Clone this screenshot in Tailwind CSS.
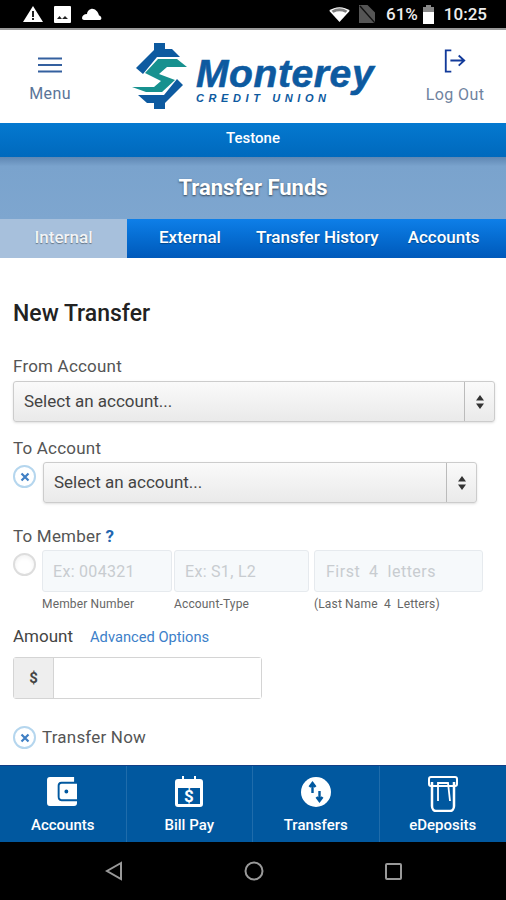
<!DOCTYPE html>
<html lang="en">
<head>
  <meta charset="UTF-8">
  <meta name="viewport" content="width=device-width, initial-scale=1.0">
  <title>Transfer Funds</title>
  <script src="https://cdn.jsdelivr.net/npm/@tailwindcss/browser@4"></script>
</head>
<body class="bg-white font-['Roboto',sans-serif] text-[#333]">
  <div class="w-[506px] h-[900px] flex flex-col overflow-hidden">

    <!-- Status bar -->
    <div class="h-[30px] shrink-0 bg-black border-b-2 border-[#999] flex items-center pl-[23px] pr-[19px] text-white">
      <svg class="w-[20px] h-[18px]" viewBox="0 0 20 18"><path d="M10 1 L20 17 H0 Z" fill="#fff"/><rect x="9" y="6" width="2" height="6" fill="#222"/><rect x="9" y="13" width="2" height="2" fill="#222"/></svg>
      <svg class="w-[17px] h-[17px] ml-[11px]" viewBox="0 0 17 17"><rect width="17" height="17" rx="1" fill="#fff"/><path d="M3 13 L5.500 10 L8 13 Z M8 13 L11 10 L14 13 Z" fill="#222"/></svg>
      <svg class="w-[20px] h-[12px] ml-[11px]" viewBox="0 0 20 12"><path d="M2 12 H18 C20 12 20 8 17 7.500 C16 3 12 0 9 1 C6.500 1.500 5 4 5 6 C2 6 0 8 0 10 C0 11 1 12 2 12 Z" fill="#fff"/></svg>
      <svg class="w-[21px] h-[15px] ml-auto" viewBox="0 0 22 16"><path d="M0 4 C6 -1 16 -1 22 4 L11 16 Z" fill="#fff"/><path d="M2.500 4 C8 0.500 14 0.500 19.500 4 L17.500 6 C13 4 9 4 4.500 6 Z" fill="#000" opacity=".5"/></svg>
      <svg class="w-[16px] h-[18px] ml-[9px]" viewBox="0 0 17 19"><path d="M0 19 V0 H9 L17 8 V19 Z" fill="#555"/><path d="M1 1 L17 19" stroke="#111" stroke-width="1.500"/></svg>
      <span class="ml-[11px] text-[17px] font-medium leading-none text-[#eee]">61%</span>
      <svg class="w-[11px] h-[19px] ml-[5px]" viewBox="0 0 11 19"><rect x="3" width="5" height="3" fill="#888"/><rect y="2" width="11" height="6" fill="#888"/><rect y="7" width="11" height="12" fill="#fff"/></svg>
      <span class="ml-[10px] text-[17px] font-medium leading-none text-[#eee]">10:25</span>
    </div>

    <!-- Header -->
    <header class="h-[93px] shrink-0 flex items-start relative">
      <div class="w-[100px] flex flex-col items-center pt-[27px]">
        <svg class="w-[24px] h-[16px]" viewBox="0 0 24 16" fill="none" stroke="#34609f" stroke-width="2"><path d="M0 1.500 H24 M0 8 H24 M0 14.500 H24"/></svg>
        <span class="mt-[11px] text-[16px] leading-[20px] tracking-[0.4px] text-[#5a7498]">Menu</span>
      </div>
      <div class="w-[304px] pl-[31px] pt-[12px] flex items-start">
        <svg class="w-[58px] h-[68px] shrink-0" viewBox="132 42 58 68">
          <path d="M155 43 H166 V49 H173 L181 57 H158 L144 74 L137 68 L155 50 Z" fill="#0d5aa0"/>
          <path d="M159 59 H178 L188 67 H168 L160 74 L176 80 L163 92 H147 L133 87 H155 L162 81 L146 73 Z" fill="#17918f"/>
          <path d="M178 79 L184 85 L166 103 V109 H155 V103 H148 L139 95 H165 Z" fill="#0d5aa0"/>
        </svg>
        <div class="ml-[7px] mt-[14px] flex flex-col">
          <span class="text-[#0d5aa0] text-[39px] leading-[36px] font-bold italic font-['Liberation_Sans',sans-serif] tracking-[0.6px] [-webkit-text-stroke:0.6px_#0d5aa0]">Monterey</span>
          <span class="text-[#0d5aa0] text-[11px] leading-[12px] font-bold italic tracking-[4.6px] font-['Liberation_Sans',sans-serif]">CREDIT UNION</span>
        </div>
      </div>
      <div class="w-[102px] flex flex-col items-center pt-[19px]">
        <svg class="w-[24px] h-[24px]" viewBox="0 0 24 26" fill="none" stroke="#123a9a" stroke-width="2"><path d="M8 1.500 H2 V24.500 H8 M7 12.500 H22 M16 7 L22 12.500 L16 18"/></svg>
        <span class="mt-[12px] text-[16px] leading-[20px] tracking-[0.4px] text-[#6f83a0]">Log Out</span>
      </div>
    </header>

    <!-- Member bar -->
    <div class="h-[34px] shrink-0 bg-gradient-to-b from-[#0579d0] to-[#0069bd] flex items-center justify-center pb-[3px] text-white text-[15px] font-medium">Testone</div>

    <!-- Title band -->
    <div class="h-[62px] shrink-0 bg-gradient-to-b from-[#5f87b3] via-[#7aa3cd] to-[#7ea6cf] via-15% flex items-center justify-center pb-[2px] text-white text-[22px] font-bold [text-shadow:0_1px_2px_#00000099]">Transfer Funds</div>

    <!-- Tabs -->
    <nav class="h-[39px] shrink-0 flex text-[17px] font-medium text-white">
      <div class="w-[127px] bg-[#a7c0dc] flex items-center justify-center pb-[2px] text-[#f2f4f6] [text-shadow:0_1px_1px_#0006]">Internal</div>
      <div class="flex-1 flex items-center pb-[2px] bg-gradient-to-b from-[#0e7fe8] to-[#0059ba] [text-shadow:0_1px_1px_#0005]">
        <span class="ml-[32px]">External</span>
        <span class="ml-[35px]">Transfer History</span>
        <span class="ml-[29px]">Accounts</span>
      </div>
    </nav>

    <!-- Form -->
    <main class="flex-1 px-[13px] pt-[41px]">
      <h2 class="text-[23px] leading-[30px] font-medium text-[#222]">New Transfer</h2>

      <label class="block mt-[27px] text-[17px] leading-[20px] tracking-[0.2px] text-[#555]">From Account</label>
      <div class="mt-[5px] h-[41px] w-[482px] flex items-center border border-[#ccc] rounded-[3px] bg-gradient-to-b from-[#fafafa] to-[#eaeaea] shadow-sm">
        <span class="flex-1 pl-[10px] text-[17px] text-[#444]">Select an account...</span>
        <span class="w-[30px] h-full border-l border-[#bbb] flex items-center justify-center">
          <svg class="w-[10px] h-[14px]" viewBox="0 0 10 14" fill="#333"><path d="M5 0 L9 5.500 H1 Z M5 14 L9 8.500 H1 Z"/></svg>
        </span>
      </div>

      <label class="block mt-[16px] text-[17px] leading-[20px] tracking-[0.2px] text-[#555]">To Account</label>
      <div class="flex items-start mt-[4px]">
        <span class="w-[23px] h-[23px] shrink-0 rounded-full border-2 border-[#b5d6ee] flex items-center justify-center mt-[3px]">
          <svg class="w-[10px] h-[10px]" viewBox="0 0 10 10" stroke="#3f7fc4" stroke-width="2.200"><path d="M1.500 1.500 L8.500 8.500 M8.500 1.500 L1.500 8.500"/></svg>
        </span>
        <div class="ml-[7px] h-[41px] w-[434px] flex items-center border border-[#ccc] rounded-[3px] bg-gradient-to-b from-[#fafafa] to-[#eaeaea] shadow-sm">
          <span class="flex-1 pl-[10px] text-[17px] text-[#444]">Select an account...</span>
          <span class="w-[30px] h-full border-l border-[#bbb] flex items-center justify-center">
            <svg class="w-[10px] h-[14px]" viewBox="0 0 10 14" fill="#333"><path d="M5 0 L9 5.500 H1 Z M5 14 L9 8.500 H1 Z"/></svg>
          </span>
        </div>
      </div>

      <div class="mt-[23px] text-[17px] leading-[20px] tracking-[0.2px] text-[#555]">To Member <span class="text-[#2266b0] font-bold">?</span></div>
      <div class="flex items-start mt-[4px]">
        <span class="w-[23px] h-[23px] shrink-0 rounded-full border-2 border-[#ddd] bg-white shadow-inner mt-[3px]"></span>
        <div class="ml-[6px] flex flex-col w-[130px]">
          <input disabled placeholder="Ex: 004321" class="h-[42px] w-[130px] border border-[#e6eaee] rounded-[3px] bg-[#f6f9fb] pl-[10px] text-[16px] tracking-[0.3px] placeholder:text-[#c8ccd0]">
          <span class="mt-[4px] text-[12px] leading-[16px] tracking-[0.15px] text-[#666]">Member Number</span>
        </div>
        <div class="ml-[2px] flex flex-col w-[135px]">
          <input disabled placeholder="Ex: S1, L2" class="h-[42px] w-[135px] border border-[#e6eaee] rounded-[3px] bg-[#f6f9fb] pl-[10px] text-[16px] tracking-[0.3px] placeholder:text-[#c8ccd0]">
          <span class="mt-[4px] text-[12px] leading-[16px] tracking-[0.15px] text-[#666]">Account-Type</span>
        </div>
        <div class="ml-[5px] flex flex-col w-[169px]">
          <input disabled placeholder="First  4  letters" class="h-[42px] w-[169px] border border-[#e6eaee] rounded-[3px] bg-[#f6f9fb] pl-[11px] text-[16px] tracking-[0.5px] placeholder:text-[#c8ccd0]">
          <span class="mt-[4px] text-[12px] leading-[16px] tracking-[0.15px] whitespace-pre text-[#666]">(Last Name  4  Letters)</span>
        </div>
      </div>

      <div class="mt-[15px] flex items-center h-[20px]">
        <span class="text-[17px] text-[#444]">Amount</span>
        <a class="ml-[17px] text-[14.7px] text-[#3d7fc9]">Advanced Options</a>
      </div>
      <div class="mt-[10px] h-[42px] w-[249px] flex border border-[#d4d4d4] rounded-[3px]">
        <span class="w-[40px] bg-[#eeeeee] border-r border-[#d4d4d4] flex items-center justify-center text-[15px] font-bold text-[#444]">$</span>
        <input class="flex-1 min-w-0 bg-white">
      </div>

      <div class="mt-[26px] flex items-center">
        <span class="w-[23px] h-[23px] shrink-0 rounded-full border-2 border-[#b5d6ee] flex items-center justify-center">
          <svg class="w-[10px] h-[10px]" viewBox="0 0 10 10" stroke="#3f7fc4" stroke-width="2.200"><path d="M1.500 1.500 L8.500 8.500 M8.500 1.500 L1.500 8.500"/></svg>
        </span>
        <span class="ml-[6px] text-[17px] tracking-[0.2px] text-[#555]">Transfer Now</span>
      </div>
    </main>

    <!-- Bottom nav -->
    <nav class="h-[77px] shrink-0 bg-[#01589f] border-t border-[#123f86] grid grid-cols-4 text-white text-[15px] font-medium">
      <div class="flex flex-col items-center border-r border-[#1f6cab] pt-[11px]">
        <svg class="w-[31px] h-[29px]" viewBox="0 0 32 30"><path d="M3 0 H28 V5 H15 C12 5 11 7 11 9 V20 C11 23 12 25 15 25 H31 V27 C31 29 30 30 28 30 H3 C1 30 0 29 0 27 V3 C0 1 1 0 3 0 Z" fill="#fff"/><path d="M15 7 H31 V23 H15 C14 23 13 22 13 21 V9 C13 8 14 7 15 7 Z M20 13 A2 2 0 1 0 20 17 A2 2 0 1 0 20 13 Z" fill="#fff" fill-rule="evenodd"/></svg>
        <span class="mt-[9px] leading-[20px]">Accounts</span>
      </div>
      <div class="flex flex-col items-center border-r border-[#1f6cab] pt-[10px]">
        <svg class="w-[28px] h-[31px]" viewBox="0 0 28 31"><path d="M7 0 H9 V3 H19 V0 H21 V3 H25 C27 3 28 4 28 6 V28 C28 30 27 31 25 31 H3 C1 31 0 30 0 28 V6 C0 4 1 3 3 3 H7 Z" fill="#fff"/><rect x="3" y="12" width="22" height="16" fill="#01589f"/><text x="14" y="26" text-anchor="middle" font-family="Roboto" font-weight="700" font-size="17" fill="#fff">$</text></svg>
        <span class="mt-[8px] leading-[20px]">Bill Pay</span>
      </div>
      <div class="flex flex-col items-center border-r border-[#1f6cab] pt-[11px]">
        <svg class="w-[30px] h-[30px]" viewBox="0 0 30 30"><circle cx="15" cy="15" r="15" fill="#fff"/><path d="M11.500 16 V7 M8.500 10 L11.500 6 L14.500 10 M18.500 14 V23 M15.500 20 L18.500 24 L21.500 20" fill="none" stroke="#01589f" stroke-width="2.400"/></svg>
        <span class="mt-[8px] leading-[20px]">Transfers</span>
      </div>
      <div class="flex flex-col items-center pt-[10px]">
        <svg class="w-[30px] h-[36px]" viewBox="0 0 30 36" fill="none" stroke="#fff"><rect x="1" y="1" width="28" height="9" rx="2" stroke-width="2"/><path d="M4 6 V30 C4 33 6 35 8 35 H22 C24 35 26 33 26 30 V6" stroke-width="2.500"/><path d="M10 25 V7 H20 L22 25" stroke-width="1.800"/></svg>
        <span class="mt-[3px] leading-[20px]">eDeposits</span>
      </div>
    </nav>

    <!-- Android nav -->
    <div class="h-[58px] shrink-0 bg-black grid grid-cols-[227px_auto_1fr] items-center">
      <svg class="w-[18px] h-[20px] ml-[105px]" viewBox="0 0 18 20" fill="none" stroke="#999" stroke-width="2"><path d="M16 2 L2 10 L16 18 Z"/></svg>
      <svg class="w-[20px] h-[20px] ml-[17px]" viewBox="0 0 20 20" fill="none" stroke="#999" stroke-width="2"><circle cx="10" cy="10" r="8.500"/></svg>
      <svg class="w-[17px] h-[17px] ml-[121px]" viewBox="0 0 17 17" fill="none" stroke="#999" stroke-width="2"><rect x="1" y="1" width="15" height="15" rx="1"/></svg>
    </div>
  </div>
</body>
</html>
